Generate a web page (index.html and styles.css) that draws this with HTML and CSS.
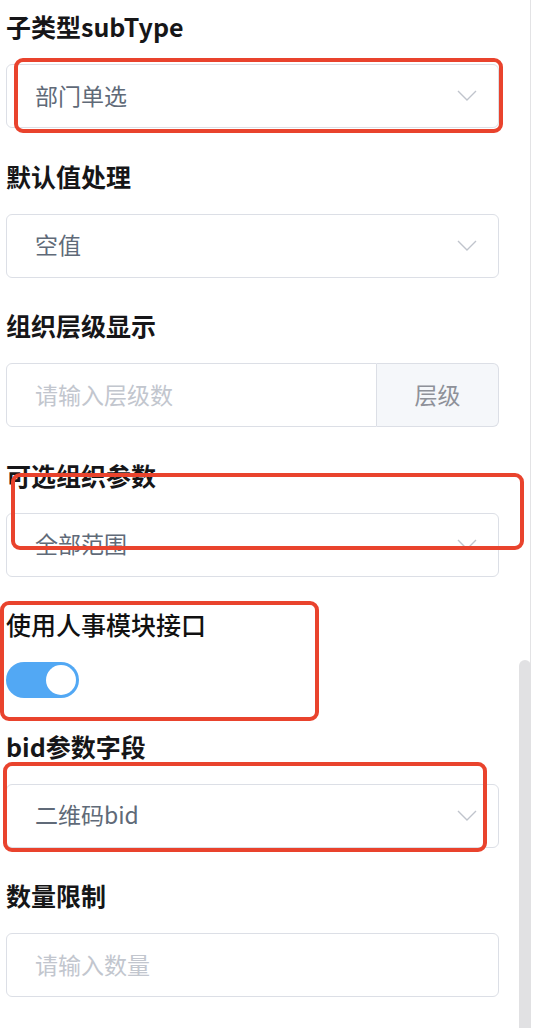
FILE: index.html
```html
<!DOCTYPE html>
<html lang="zh-CN">
<head>
<meta charset="utf-8">
<title>表单配置</title>
<link rel="stylesheet" href="styles.css">
</head>
<body>
<div class="page">
  <div class="panel">
    <div class="form">
      <div class="field">
        <div class="label">子类型subType</div>
        <div class="select">
          <span class="value">部门单选</span>
          <svg class="chev" width="20" height="11" viewBox="0 0 20 11"><polyline points="1,1 10,10 19,1"/></svg>
        </div>
      </div>
      <div class="field">
        <div class="label">默认值处理</div>
        <div class="select">
          <span class="value">空值</span>
          <svg class="chev" width="20" height="11" viewBox="0 0 20 11"><polyline points="1,1 10,10 19,1"/></svg>
        </div>
      </div>
      <div class="field">
        <div class="label">组织层级显示</div>
        <div class="group">
          <div class="input group-input"><span class="placeholder">请输入层级数</span></div>
          <div class="addon">层级</div>
        </div>
      </div>
      <div class="field">
        <div class="label">可选组织参数</div>
        <div class="select">
          <span class="value">全部范围</span>
          <svg class="chev" width="20" height="11" viewBox="0 0 20 11"><polyline points="1,1 10,10 19,1"/></svg>
        </div>
      </div>
      <div class="field">
        <div class="label label-regular">使用人事模块接口</div>
        <div class="switch"><span class="knob"></span></div>
      </div>
      <div class="field">
        <div class="label">bid参数字段</div>
        <div class="select">
          <span class="value">二维码bid</span>
          <svg class="chev" width="20" height="11" viewBox="0 0 20 11"><polyline points="1,1 10,10 19,1"/></svg>
        </div>
      </div>
      <div class="field">
        <div class="label">数量限制</div>
        <div class="input"><span class="placeholder">请输入数量</span></div>
      </div>
    </div>
    <div class="thumb"></div>
  </div>
  <div class="mark mark-1"></div>
  <div class="mark mark-2"></div>
  <div class="mark mark-3"></div>
  <div class="mark mark-4"></div>
</div>
</body>
</html>
```

FILE: styles.css
```css
html, body {
  margin: 0;
  padding: 0;
  background: #ffffff;
}

body {
  font-family: "Noto Sans CJK SC", "Noto Sans", "Liberation Sans", sans-serif;
}

.page {
  position: relative;
  width: 553px;
  height: 1028px;
  overflow: hidden;
}

.panel {
  position: relative;
  width: 530px;
  height: 1028px;
  border-right: 1px solid #e3e3e5;
}

.form {
  display: flex;
  flex-direction: column;
  width: 493px;
  padding: 10px 0 0 6px;
}

.field {
  display: flex;
  flex-direction: column;
  margin-bottom: 31.5px;
}

.label {
  font-size: 25px;
  font-weight: 700;
  line-height: 32px;
  color: #161618;
  margin-bottom: 22px;
  white-space: nowrap;
}

.label-regular {
  font-weight: 500;
  color: #111;
}

.select,
.input {
  display: flex;
  align-items: center;
  justify-content: space-between;
  box-sizing: border-box;
  height: 64px;
  padding: 0 21px 3px 28px;
  border: 1px solid #dcdfe6;
  border-radius: 6px;
  background: #fff;
  font-size: 23px;
  color: #606a78;
}

.value {
  line-height: 30px;
}

.placeholder {
  color: #c2c6ce;
  line-height: 30px;
}

.chev {
  display: block;
  margin-top: 2px;
}

.chev polyline {
  fill: none;
  stroke: #c0c4cc;
  stroke-width: 1.4;
}

.group {
  display: flex;
  height: 64px;
}

.group-input {
  flex: 1;
  border-radius: 6px 0 0 6px;
}

.addon {
  display: flex;
  align-items: center;
  justify-content: center;
  box-sizing: border-box;
  width: 122px;
  height: 64px;
  padding-bottom: 3px;
  border: 1px solid #dcdfe6;
  border-left: none;
  border-radius: 0 6px 6px 0;
  background: #f5f7fa;
  color: #8e9199;
  font-size: 23px;
}

.switch {
  display: flex;
  justify-content: flex-end;
  align-items: center;
  box-sizing: border-box;
  width: 73px;
  height: 36px;
  padding: 3px;
  border-radius: 18px;
  background: #52a8f4;
}

.knob {
  display: block;
  width: 30px;
  height: 30px;
  border-radius: 50%;
  background: #fff;
}

.thumb {
  position: absolute;
  top: 660px;
  right: -1px;
  bottom: 0;
  width: 12px;
  border-radius: 6px 6px 0 0;
  background: #e1e1e3;
}

.mark {
  position: absolute;
  box-sizing: border-box;
  border: 4.5px solid #e9432d;
  border-radius: 9px;
}

.mark-1 {
  left: 14px;
  top: 58px;
  width: 489px;
  height: 75px;
}

.mark-2 {
  left: 11px;
  top: 473px;
  width: 513px;
  height: 77px;
}

.mark-3 {
  left: 0;
  top: 601px;
  width: 319px;
  height: 120px;
}

.mark-4 {
  left: 3px;
  top: 762px;
  width: 484px;
  height: 90px;
}
```
